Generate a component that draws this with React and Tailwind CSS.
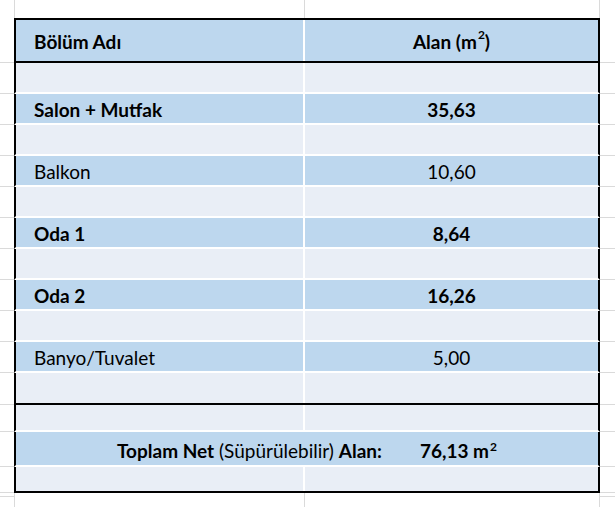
import React from 'react';

const BLUE = 'bg-[#bdd7ee]';
const LIGHT = 'bg-[#e9eef6]';

const rows = [
  { name: '', value: '', tone: 'light' },
  { name: 'Salon + Mutfak', value: '35,63', tone: 'blue', bold: true },
  { name: '', value: '', tone: 'light' },
  { name: 'Balkon', value: '10,60', tone: 'blue' },
  { name: '', value: '', tone: 'light' },
  { name: 'Oda 1', value: '8,64', tone: 'blue', bold: true },
  { name: '', value: '', tone: 'light' },
  { name: 'Oda 2', value: '16,26', tone: 'blue', bold: true },
  { name: '', value: '', tone: 'light' },
  { name: 'Banyo/Tuvalet', value: '5,00', tone: 'blue' },
];

// margin cells outside the table, with the sheet's gridlines
const Margin = ({ side }) => (
  <div
    className={`border-b border-[#dadada] ${side === 'left' ? 'w-[14px]' : 'flex-1'}`}
  />
);

const SheetRow = ({ height, children }) => (
  <div className={`flex ${height}`}>
    <Margin side="left" />
    {children}
    <Margin side="right" />
  </div>
);

const Cells = ({ tone, bottom = 'white', first, second }) => (
  <div
    className={`w-[586px] flex border-x-2 border-black ${
      bottom === 'black' ? 'border-b-2 border-b-black' : 'border-b-2 border-b-white'
    }`}
  >
    <div
      className={`w-[289px] border-r-2 border-white flex items-center pl-[18px] pt-[1px] ${
        tone === 'blue' ? BLUE : LIGHT
      }`}
    >
      {first}
    </div>
    <div
      className={`flex-1 flex items-center justify-center pt-[1px] ${
        tone === 'blue' ? BLUE : LIGHT
      }`}
    >
      {second}
    </div>
  </div>
);

const Sq = () => (
  <span className="text-[12px] relative -top-[7px] ml-[1px]">2</span>
);

const GridCols = ({ height, withLine }) => (
  <div className={`flex ${height}`}>
    <div className={`w-[15px] border-r border-[#dadada] ${withLine ? 'border-b' : ''}`} />
    <div className="w-[290px] border-r border-[#dadada]" />
    <div className="w-[295px] border-r border-[#dadada]" />
    <div className={`flex-1 border-[#dadada] ${withLine ? 'border-b' : ''}`} />
  </div>
);

export default function App() {
  return (
    <div className="w-[615px] h-[507px] overflow-hidden bg-white text-black font-['Lato',sans-serif] text-[19px] leading-none">
      <GridCols height="h-[18px]" />

      {/* header */}
      <SheetRow height="h-[45px]">
        <div className={`w-[586px] flex border-2 border-black ${BLUE}`}>
          <div className="w-[289px] border-r-2 border-white flex items-center pl-[18px] pt-[2px] font-bold">
            Bölüm Adı
          </div>
          <div className="flex-1 flex items-center justify-center pt-[2px] font-bold">
            Alan (m<Sq />)
          </div>
        </div>
      </SheetRow>

      {rows.map((r, i) => (
        <SheetRow key={i} height="h-[31px]">
          <Cells
            tone={r.tone}
            first={<span className={r.bold ? 'font-bold' : ''}>{r.name}</span>}
            second={<span className={r.bold ? 'font-bold' : ''}>{r.value}</span>}
          />
        </SheetRow>
      ))}

      <SheetRow height="h-[32px]">
        <Cells tone="light" bottom="black" />
      </SheetRow>

      <SheetRow height="h-[27px]">
        <Cells tone="light" />
      </SheetRow>

      {/* total, merged across both columns */}
      <SheetRow height="h-[35px]">
        <div className="w-[586px] border-x-2 border-black border-b-2 border-b-white">
          <div className={`h-full flex items-center justify-center pt-[3px] ${BLUE}`}>
            <span className="font-bold">Toplam Net</span>
            <span>&nbsp;(Süpürülebilir)&nbsp;</span>
            <span className="font-bold">Alan:</span>
            <span className="font-bold ml-[38px]">
              76,13 m<Sq />
            </span>
          </div>
        </div>
      </SheetRow>

      <SheetRow height="h-[26px]">
        <Cells tone="light" bottom="black" />
      </SheetRow>

      <GridCols height="h-[4px]" withLine />
      <GridCols height="h-[10px]" />
    </div>
  );
}
